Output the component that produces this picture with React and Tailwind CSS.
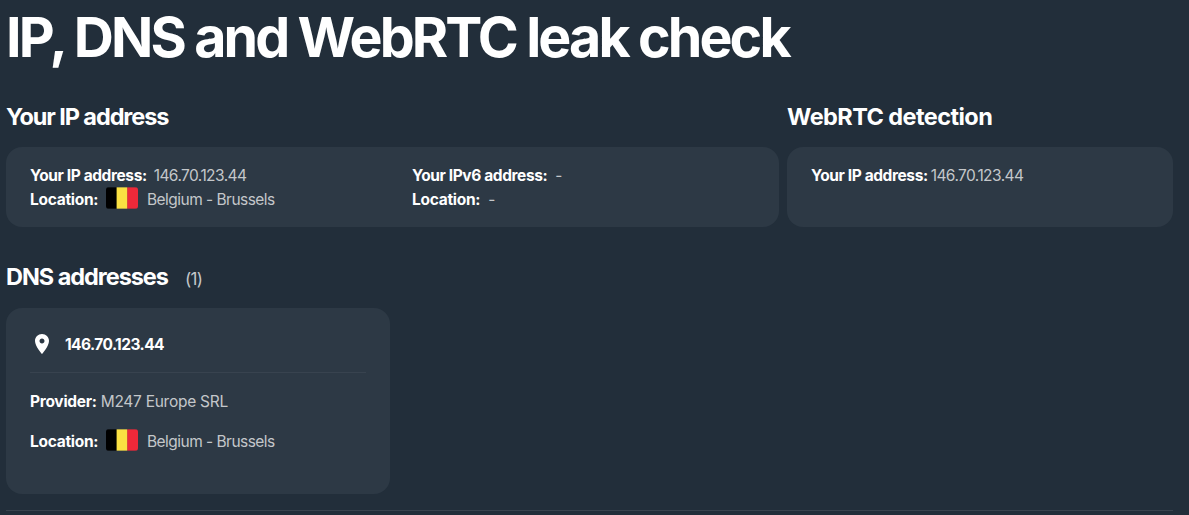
const IP = '146.70.123.44';

const BelgiumFlag = () => (
    <svg width="32" height="22" viewBox="0 0 32 22" className="shrink-0 rounded-[3px] ml-2 mr-[9px]">
        <rect width="11" height="22" fill="#000000" />
        <rect x="10.6" width="11" height="22" fill="#fae042" />
        <rect x="21.3" width="11" height="22" fill="#ed2939" />
        <rect width="32" height="1" fill="#2d3945" fillOpacity="0.35" />
        <rect y="21" width="32" height="1" fill="#2d3945" fillOpacity="0.35" />
    </svg>
);

const PinIcon = () => (
    <svg width="24" height="24" viewBox="0 0 24 24" fill="#ffffff" className="shrink-0">
        <path d="M12 2C8.13 2 5 5.13 5 9c0 5.25 7 13 7 13s7-7.75 7-13c0-3.87-3.13-7-7-7zm0 9.5c-1.38 0-2.5-1.12-2.5-2.5s1.12-2.5 2.5-2.5 2.5 1.12 2.5 2.5-1.12 2.5-2.5 2.5z" />
    </svg>
);

const Label = ({ children, cls }) => <span className={`font-bold text-white ${cls}`}>{children}</span>;

const Location = () => (
    <div className="flex h-6">
        <Label cls="w-[68px] tracking-[-0.28px]">Location:</Label>
        <BelgiumFlag />
        <span className="tracking-[-0.53px]">Belgium - Brussels</span>
    </div>
);

export default function App() {
    return (
        <div className="h-[515px] overflow-hidden bg-[#222e3a] pl-1.5 pr-4 font-['Inter',sans-serif] text-[15.5px] leading-[26px] text-[#c4c7ca] whitespace-nowrap">
            <h1 className="h-[99px] text-[55.5px] leading-[74px] font-bold text-white tracking-[-2.88px]">IP, DNS and WebRTC leak check</h1>

            {/* IP and WebRTC results */}
            <div className="flex gap-2">
                <section className="w-[773px]">
                    <h2 className="mb-4 h-8 text-[23.5px] leading-9 font-bold text-white tracking-[-1.1px]">Your IP address</h2>
                    <div className="grid h-20 grid-cols-[382px_1fr] rounded-2xl bg-[#2d3945] px-6 py-4">
                        <div>
                            <div className="flex h-6">
                                <Label cls="tracking-[-0.4px]">Your IP address:</Label>
                                <span className="ml-[7px] tracking-[-0.57px]">{IP}</span>
                            </div>
                            <Location />
                        </div>
                        <div>
                            <div className="flex h-6">
                                <Label cls="tracking-[-0.4px]">Your IPv6 address:</Label>
                                <span className="ml-2">-</span>
                            </div>
                            <div className="flex h-6">
                                <Label cls="tracking-[-0.28px]">Location:</Label>
                                <span className="ml-2">-</span>
                            </div>
                        </div>
                    </div>
                </section>
                <section className="flex-1">
                    <h2 className="mb-4 h-8 text-[23.5px] leading-9 font-bold text-white tracking-[-0.57px]">WebRTC detection</h2>
                    <div className="flex h-20 rounded-2xl bg-[#2d3945] px-6 py-4">
                        <Label cls="tracking-[-0.4px]">Your IP address:</Label>
                        <span className="ml-[3px] tracking-[-0.57px]">{IP}</span>
                    </div>
                </section>
            </div>

            {/* DNS servers */}
            <section className="mt-[33px]">
                <div className="mb-4 flex h-8 items-baseline">
                    <h2 className="text-[23.5px] leading-[34px] font-bold text-white tracking-[-1.05px]">DNS addresses</h2>
                    <span className="ml-[17px] text-[17px] tracking-[-0.7px]">(1)</span>
                </div>
                <div className="h-[186px] w-96 rounded-2xl bg-[#2d3945] px-6 pt-6">
                    <div className="flex h-[41px] border-b border-[#38434f]">
                        <PinIcon />
                        <Label cls="ml-[11px] tracking-[-0.57px]">{IP}</Label>
                    </div>
                    <div className="mt-4 mb-4 flex h-6">
                        <Label cls="tracking-[-0.28px]">Provider:</Label>
                        <span className="ml-1 tracking-[-0.27px]">M247 Europe SRL</span>
                    </div>
                    <Location />
                </div>
            </section>
            <div className="mt-4 border-t border-[#39434e]" />
        </div>
    );
}
